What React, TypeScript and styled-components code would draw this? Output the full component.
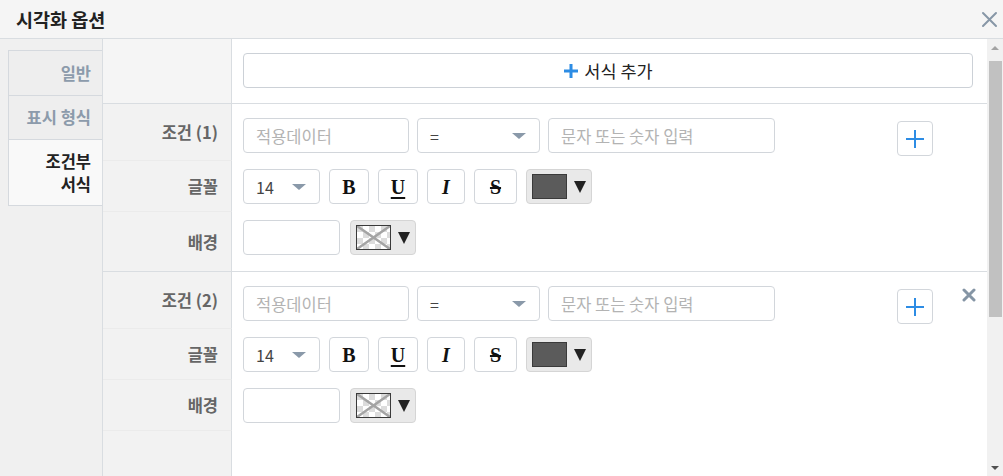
import React from "react";
import styled, { createGlobalStyle } from "styled-components";

const GlobalStyle = createGlobalStyle`
  html, body { margin: 0; padding: 0; background: #fff; }
  body { font-family: "Noto Sans CJK KR", "Noto Sans", sans-serif; color: #333; }
  * { box-sizing: border-box; }
`;

const Dialog = styled.div`
  width: 1003px;
  height: 476px;
  display: flex;
  flex-direction: column;
  overflow: hidden;
  background: #fff;
`;

const Header = styled.div`
  height: 39px;
  flex: none;
  display: flex;
  align-items: center;
  justify-content: space-between;
  padding: 0 2px 0 16px;
  background: #f5f5f5;
  border-bottom: 1px solid #d9dde1;
`;

const Title = styled.h1`
  margin: 0;
  font-size: 18.5px;
  font-weight: 700;
  color: #222;
`;

const IconButton = styled.button`
  border: 0;
  background: transparent;
  padding: 0;
  display: flex;
  align-items: center;
  justify-content: center;
  width: 24px;
  height: 24px;
  cursor: pointer;
`;

const Body = styled.div`
  flex: 1;
  display: flex;
  min-height: 0;
`;

const Sidebar = styled.div`
  width: 103px;
  flex: none;
  background: #f0f0f0;
  border-right: 1px solid #d9dde1;
  padding: 11px 0 0 8px;
`;

const TabList = styled.div`
  display: flex;
  flex-direction: column;
  border-top: 1px solid #d5d9de;
  border-left: 1px solid #d5d9de;
`;

const Tab = styled.div<{ $active?: boolean; $h: number }>`
  height: ${(p) => p.$h}px;
  display: flex;
  align-items: center;
  justify-content: flex-end;
  text-align: right;
  padding-right: 11px;
  font-size: 16.5px;
  font-weight: 700;
  line-height: 23px;
  color: ${(p) => (p.$active ? "#222" : "#8c9bab")};
  background: ${(p) => (p.$active ? "#f9f9f9" : "#eeeeee")};
  border-bottom: 1px solid #d5d9de;
`;

const Main = styled.div`
  flex: 1;
  display: flex;
  min-width: 0;
`;

const Content = styled.div`
  flex: 1;
  display: flex;
  flex-direction: column;
  min-width: 0;
`;

const Section = styled.div<{ $border?: boolean }>`
  display: flex;
  flex-direction: column;
  border-bottom: ${(p) => (p.$border ? "1px solid #d9dde1" : "0")};
`;

const Row = styled.div<{ $fill?: boolean }>`
  display: flex;
  flex: ${(p) => (p.$fill ? 1 : "none")};
`;

const LabelCell = styled.div<{ $light?: boolean; $line?: boolean }>`
  width: 129px;
  flex: none;
  background: ${(p) => (p.$light ? "#f5f5f5" : "#f2f2f2")};
  border-right: 1px solid #d9dde1;
  border-bottom: ${(p) => (p.$line ? "1px solid #ebebeb" : "0")};
  display: flex;
  align-items: center;
  justify-content: flex-end;
  padding-right: 13px;
  font-size: 16.5px;
  font-weight: 700;
  color: #666;
`;

const FieldCell = styled.div<{ $pt: number; $pb: number; $gap?: number }>`
  flex: 1;
  display: flex;
  align-items: flex-start;
  gap: ${(p) => p.$gap ?? 8}px;
  padding: ${(p) => p.$pt}px 11px ${(p) => p.$pb}px 11px;
  min-width: 0;
`;

const AddButton = styled.button`
  flex: 1;
  margin-right: 3px;
  height: 35px;
  border: 1px solid #ccd1d7;
  border-radius: 4px;
  background: #fff;
  display: flex;
  align-items: center;
  justify-content: center;
  gap: 5px;
  font-family: inherit;
  font-size: 17.5px;
  color: #222;
  cursor: pointer;
`;

const Input = styled.input<{ $w: number }>`
  width: ${(p) => p.$w}px;
  height: 35px;
  flex: none;
  border: 1px solid #d2d6db;
  border-radius: 4px;
  padding: 0 12px;
  font-family: inherit;
  font-size: 16.5px;
  color: #333;
  background: #fff;
  outline: none;
  &::placeholder { color: #b3b3b3; }
`;

const Select = styled.div<{ $w: number }>`
  width: ${(p) => p.$w}px;
  height: 35px;
  flex: none;
  border: 1px solid #d2d6db;
  border-radius: 4px;
  background: #fff;
  display: flex;
  align-items: center;
  justify-content: space-between;
  padding: 0 13px 0 12px;
  font-size: 16px;
  color: #444;
`;

const Caret = styled.span`
  width: 0;
  height: 0;
  border-left: 7px solid transparent;
  border-right: 7px solid transparent;
  border-top: 6px solid #8a99a9;
`;

const SmallPlus = styled.button`
  margin: 3px 0 -3px 114px;
  width: 36px;
  height: 35px;
  flex: none;
  border: 1px solid #d2d6db;
  border-radius: 4px;
  background: #fff;
  display: flex;
  align-items: center;
  justify-content: center;
  padding: 0;
  cursor: pointer;
`;

const Spacer = styled.div`
  flex: 1;
`;

const DeleteBtn = styled.button`
  border: 0;
  background: transparent;
  padding: 0;
  margin-top: 1px;
  margin-right: -1px;
  width: 16px;
  height: 16px;
  display: flex;
  align-items: center;
  justify-content: center;
  cursor: pointer;
`;

const StyleBtn = styled.button<{ $w: number }>`
  width: ${(p) => p.$w}px;
  height: 35px;
  flex: none;
  border: 1px solid #d2d6db;
  border-radius: 4px;
  background: #fff;
  padding: 0;
  display: flex;
  align-items: center;
  justify-content: center;
  font-family: "Liberation Serif", serif;
  font-size: 20px;
  color: #111;
  cursor: pointer;
`;

const Glyph = styled.span<{ $kind: "b" | "u" | "i" | "s" }>`
  line-height: 1;
  font-weight: 700;
  font-style: ${(p) => (p.$kind === "i" ? "italic" : "normal")};
  text-decoration: ${(p) =>
    p.$kind === "u" ? "underline" : p.$kind === "s" ? "line-through" : "none"};
  text-decoration-thickness: 2px;
  text-underline-offset: 3px;
`;

const ColorBtn = styled.button`
  width: 66px;
  height: 35px;
  flex: none;
  border: 1px solid #d5d5d5;
  border-radius: 4px;
  background: #e9e9e9;
  padding: 0 0 0 5px;
  display: flex;
  align-items: center;
  gap: 7px;
  cursor: pointer;
`;

const Swatch = styled.span<{ $color?: string }>`
  width: 35px;
  height: 25px;
  flex: none;
  border: 1px solid #3a3a3a;
  background: ${(p) => p.$color || "#fff"};
  display: flex;
`;

const Down = styled.span`
  width: 0;
  height: 0;
  border-left: 6px solid transparent;
  border-right: 6px solid transparent;
  border-top: 12px solid #222;
`;

const Scrollbar = styled.div`
  width: 16px;
  flex: none;
  background: #f1f1f1;
  display: flex;
  flex-direction: column;
  align-items: center;
`;

const ScrollArrow = styled.div<{ $up?: boolean }>`
  height: 17px;
  flex: none;
  display: flex;
  align-items: center;
  justify-content: center;
  &::before {
    content: "";
    width: 0;
    height: 0;
    border-left: 4px solid transparent;
    border-right: 4px solid transparent;
    ${(p) =>
      p.$up
        ? "border-bottom: 4px solid #a3a3a3;"
        : "border-top: 4px solid #505050;"}
  }
`;

const Track = styled.div`
  flex: 1;
  width: 100%;
  padding: 5px 1px 0 2px;
`;

const Thumb = styled.div`
  height: 256px;
  background: #c1c1c1;
`;

const CloseIcon = () => (
  <svg width="17" height="17" viewBox="0 0 17 17">
    <path d="M2 2L15 15M15 2L2 15" stroke="#8797a7" strokeWidth="2" strokeLinecap="round" />
  </svg>
);

const DeleteIcon = () => (
  <svg width="14" height="14" viewBox="0 0 14 14">
    <path d="M2 2L12 12M12 2L2 12" stroke="#8595a5" strokeWidth="3" strokeLinecap="round" />
  </svg>
);

const PlusIcon = ({ size, stroke }: { size: number; stroke: number }) => (
  <svg width={size} height={size} viewBox={`0 0 ${size} ${size}`}>
    <path
      d={`M${size / 2} 1V${size - 1}M1 ${size / 2}H${size - 1}`}
      stroke="#2d8ce4"
      strokeWidth={stroke}
    />
  </svg>
);

const TransparentSwatch = () => (
  <svg width="33" height="23" viewBox="0 0 33 23">
    <rect width="33" height="23" fill="#ffffff" />
    {Array.from({ length: 4 }).map((_, r) =>
      Array.from({ length: 6 }).map((__, c) =>
        (r + c) % 2 === 0 ? (
          <rect key={`${r}-${c}`} x={c * 6} y={r * 6} width="6" height="6" fill="#dcdcdc" />
        ) : null
      )
    )}
    <path d="M0 0L33 23M33 0L0 23" stroke="#a4a4a4" strokeWidth="2.5" />
  </svg>
);

type CondProps = { n: number; last: "section" | "end"; removable?: boolean };

const Condition = ({ n, last, removable }: CondProps) => (
  <>
    <Row>
      <LabelCell $line>조건 ({n})</LabelCell>
      <FieldCell $pt={14} $pb={8}>
        <Input $w={166} placeholder="적용데이터" />
        <Select $w={123}>
          <span>=</span>
          <Caret />
        </Select>
        <Input $w={227} placeholder="문자 또는 숫자 입력" />
        <SmallPlus aria-label="조건 추가">
          <PlusIcon size={20} stroke={2} />
        </SmallPlus>
        <Spacer />
        {removable && (
          <DeleteBtn aria-label="삭제">
            <DeleteIcon />
          </DeleteBtn>
        )}
      </FieldCell>
    </Row>
    <Row>
      <LabelCell $line>글꼴</LabelCell>
      <FieldCell $pt={8} $pb={8} $gap={9}>
        <Select $w={77}>
          <span>14</span>
          <Caret />
        </Select>
        <StyleBtn $w={40}>
          <Glyph $kind="b">B</Glyph>
        </StyleBtn>
        <StyleBtn $w={40}>
          <Glyph $kind="u">U</Glyph>
        </StyleBtn>
        <StyleBtn $w={38}>
          <Glyph $kind="i">I</Glyph>
        </StyleBtn>
        <StyleBtn $w={43}>
          <Glyph $kind="s">S</Glyph>
        </StyleBtn>
        <ColorBtn aria-label="글자 색">
          <Swatch $color="#5b5b5b" />
          <Down />
        </ColorBtn>
      </FieldCell>
    </Row>
    <Row>
      <LabelCell $line={last === "end"}>배경</LabelCell>
      <FieldCell $pt={8} $pb={last === "section" ? 16 : 8} $gap={10}>
        <Input $w={97} />
        <ColorBtn aria-label="배경 색">
          <Swatch>
            <TransparentSwatch />
          </Swatch>
          <Down />
        </ColorBtn>
      </FieldCell>
    </Row>
  </>
);

export default function App() {
  return (
    <>
      <GlobalStyle />
      <Dialog>
        <Header>
          <Title>시각화 옵션</Title>
          <IconButton aria-label="닫기">
            <CloseIcon />
          </IconButton>
        </Header>
        <Body>
          <Sidebar>
            <TabList>
              <Tab $h={45}>일반</Tab>
              <Tab $h={44}>표시 형식</Tab>
              <Tab $h={66} $active>
                조건부
                <br />
                서식
              </Tab>
            </TabList>
          </Sidebar>
          <Main>
            <Content>
              <Section $border>
                <Row>
                  <LabelCell $light />
                  <FieldCell $pt={14} $pb={15}>
                    <AddButton>
                      <PlusIcon size={16} stroke={3} />
                      서식 추가
                    </AddButton>
                  </FieldCell>
                </Row>
              </Section>
              <Section $border>
                <Condition n={1} last="section" />
              </Section>
              <Section>
                <Condition n={2} last="end" removable />
              </Section>
              <Row $fill>
                <LabelCell />
                <FieldCell $pt={0} $pb={0} />
              </Row>
            </Content>
            <Scrollbar>
              <ScrollArrow $up />
              <Track>
                <Thumb />
              </Track>
              <ScrollArrow />
            </Scrollbar>
          </Main>
        </Body>
      </Dialog>
    </>
  );
}
